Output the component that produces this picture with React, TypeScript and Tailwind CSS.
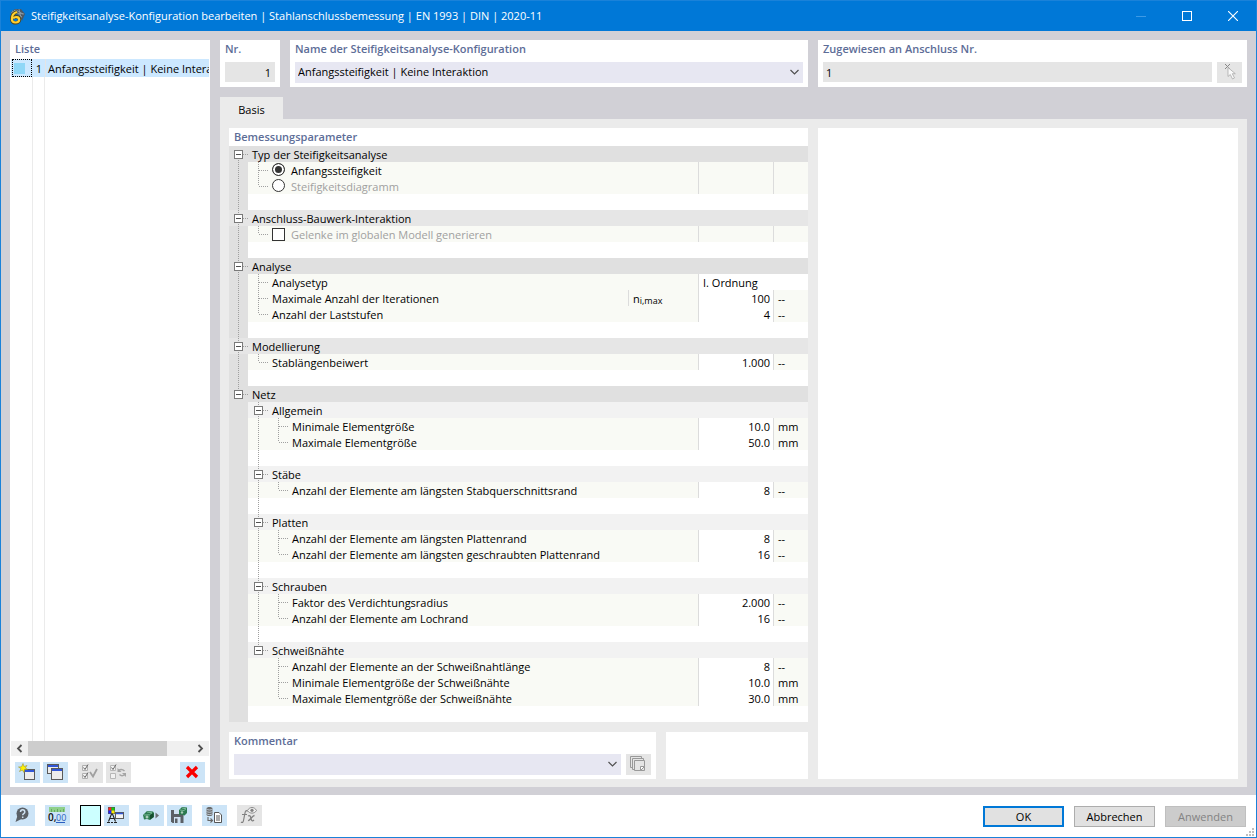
import { ReactNode } from "react";
import clsx from "clsx";

type Row = {
  label?: string;
  level?: number;
  kind?: "group" | "subgroup" | "radio" | "checkbox" | "blank";
  checked?: boolean;
  light?: boolean;
  last?: boolean;
  symbol?: ReactNode;
  value?: string;
  unit?: string;
  trunk?: boolean;
};

const rows: Row[] = [
  { label: "Typ der Steifigkeitsanalyse", kind: "group" },
  { label: "Anfangssteifigkeit", level: 1, kind: "radio", checked: true },
  { label: "Steifigkeitsdiagramm", level: 1, kind: "radio", last: true },
  { kind: "blank" },
  { label: "Anschluss-Bauwerk-Interaktion", kind: "group", light: true },
  { label: "Gelenke im globalen Modell generieren", level: 1, kind: "checkbox", last: true },
  { kind: "blank" },
  { label: "Analyse", kind: "group" },
  { label: "Analysetyp", level: 1, value: "I. Ordnung" },
  {
    label: "Maximale Anzahl der Iterationen",
    level: 1,
    symbol: (
      <>
        n<sub className="bottom-0 top-px text-[9px]">i,max</sub>
      </>
    ),
    value: "100",
    unit: "--",
  },
  { label: "Anzahl der Laststufen", level: 1, value: "4", unit: "--", last: true },
  { kind: "blank" },
  { label: "Modellierung", kind: "group", light: true },
  { label: "Stablängenbeiwert", level: 1, value: "1.000", unit: "--", last: true },
  { kind: "blank" },
  { label: "Netz", kind: "group", last: true },
  { label: "Allgemein", level: 1, kind: "subgroup" },
  { label: "Minimale Elementgröße", level: 2, value: "10.0", unit: "mm", trunk: true },
  { label: "Maximale Elementgröße", level: 2, value: "50.0", unit: "mm", trunk: true, last: true },
  { kind: "blank", trunk: true },
  { label: "Stäbe", level: 1, kind: "subgroup" },
  { label: "Anzahl der Elemente am längsten Stabquerschnittsrand", level: 2, value: "8", unit: "--", trunk: true, last: true },
  { kind: "blank", trunk: true },
  { label: "Platten", level: 1, kind: "subgroup" },
  { label: "Anzahl der Elemente am längsten Plattenrand", level: 2, value: "8", unit: "--", trunk: true },
  { label: "Anzahl der Elemente am längsten geschraubten Plattenrand", level: 2, value: "16", unit: "--", trunk: true, last: true },
  { kind: "blank", trunk: true },
  { label: "Schrauben", level: 1, kind: "subgroup" },
  { label: "Faktor des Verdichtungsradius", level: 2, value: "2.000", unit: "--", trunk: true },
  { label: "Anzahl der Elemente am Lochrand", level: 2, value: "16", unit: "--", trunk: true, last: true },
  { kind: "blank", trunk: true },
  { label: "Schweißnähte", level: 1, kind: "subgroup", last: true },
  { label: "Anzahl der Elemente an der Schweißnahtlänge", level: 2, value: "8", unit: "--" },
  { label: "Minimale Elementgröße der Schweißnähte", level: 2, value: "10.0", unit: "mm" },
  { label: "Maximale Elementgröße der Schweißnähte", level: 2, value: "30.0", unit: "mm", last: true },
  { kind: "blank" },
];

const netzIndex = rows.findIndex((r) => r.label === "Netz");

type GuideProps = { up?: boolean; down?: boolean; arm?: boolean; box?: boolean };

// One 20x16 cell of tree lines
function Guide({ up, down, arm, box }: GuideProps) {
  return (
    <svg className="h-4 w-5 shrink-0" viewBox="0 0 20 16" fill="none" stroke="#a0a0a0" shapeRendering="crispEdges">
      {up && <path d="M10.5 0v8" strokeDasharray="1 1" />}
      {down && <path d="M10.5 8v8" strokeDasharray="1 1" />}
      {arm && <path d="M11 8.5h10" strokeDasharray="1 1" />}
      {box && (
        <>
          <rect x="6.5" y="4.5" width="8" height="8" fill="#fff" stroke="#7a7a7a" />
          <path d="M8 8.5h5" stroke="#505050" />
        </>
      )}
    </svg>
  );
}

function TreeRow({ row, index }: { row: Row; index: number }) {
  const { kind, level = 0 } = row;
  const isGroup = kind === "group";
  const isHead = isGroup || kind === "subgroup";
  const isItem = !isHead && kind !== "blank";
  const isOption = kind === "radio" || kind === "checkbox";
  const id = `param-${index}`;
  const wide = row.value && !row.unit;

  return (
    <tr
      className={clsx(
        "h-4",
        isGroup && (row.light ? "bg-[#e6e6e6]" : "bg-[#e0e0e0]"),
        kind === "subgroup" && "bg-[#f2f2f2]",
        isItem && "bg-[#f9faf5]"
      )}
    >
      <td className="p-0" colSpan={row.symbol ? 1 : 2}>
        <div className="flex h-4 items-center whitespace-nowrap">
          <div className={clsx("flex shrink-0", isGroup ? "-mr-px w-5" : "w-[19px] overflow-hidden bg-[#e0e0e0]")}>
            <span className="-ml-px flex">
              <Guide
                up={index > 0 && index <= netzIndex}
                down={index < netzIndex}
                arm={isGroup}
                box={isGroup}
              />
            </span>
          </div>
          {level === 1 && <Guide up down={!row.last} arm box={kind === "subgroup"} />}
          {(level === 2 || kind === "blank") && <Guide up={row.trunk} down={row.trunk} />}
          {level === 2 && <Guide up down={!row.last} arm />}
          {isOption && (
            <input
              id={id}
              type={kind}
              name={kind === "radio" ? "analysis-type" : undefined}
              defaultChecked={row.checked}
              disabled={!row.checked}
              className={clsx(
                "ml-1 size-[13px] shrink-0 appearance-none border border-[#333] bg-white",
                kind === "radio" && "mb-[2px] rounded-full checked:bg-[#333] checked:shadow-[inset_0_0_0_2px_#fff]"
              )}
            />
          )}
          {isOption ? (
            <label htmlFor={id} className={clsx("pl-[6px] pt-[2px]", !row.checked && "text-[#a0a0a0]")}>
              {row.label}
            </label>
          ) : (
            <span className="pl-1 pt-[2px]">{row.label}</span>
          )}
        </div>
      </td>
      {row.symbol && (
        <td className="border-l border-[#dcdcdc] p-0">
          <div className="h-4 pl-1 pt-px">{row.symbol}</div>
        </td>
      )}
      {isItem ? (
        <>
          <td colSpan={wide ? 2 : 1} className={clsx("border-l border-[#dcdcdc] p-0", row.value && "bg-white")}>
            <div className={clsx("h-4 pt-px", wide ? "pl-1" : "pr-[3px] text-right")}>{row.value}</div>
          </td>
          {!wide && (
            <td className="border-l border-[#dcdcdc] p-0">
              <div className="h-4 pl-1 pt-px">{row.unit}</div>
            </td>
          )}
        </>
      ) : (
        <td colSpan={2} className="p-0" />
      )}
    </tr>
  );
}

function Panel({ title, className, children }: { title?: string; className?: string; children?: ReactNode }) {
  return (
    <section className={clsx("flex min-w-0 flex-col bg-white", className)}>
      {title && <h2 className="h-[18px] shrink-0 px-[5px] font-semibold leading-[18px] text-[#5d6d97]">{title}</h2>}
      {children}
    </section>
  );
}

type IconButtonProps = { label: string; disabled?: boolean; className?: string; children: ReactNode };

function IconButton({ label, disabled, className, children }: IconButtonProps) {
  return (
    <button
      type="button"
      aria-label={label}
      disabled={disabled}
      className={clsx(
        "flex h-[21px] w-[25px] shrink-0 items-center justify-center",
        disabled ? "bg-[#e5e5e5]" : "bg-[#cce4f7]",
        className
      )}
    >
      {children}
    </button>
  );
}

function Icon({ children }: { children: ReactNode }) {
  return (
    <svg width="19" height="19" viewBox="0 0 19 19" fill="none">
      {children}
    </svg>
  );
}

function Chevron() {
  return (
    <svg className="pointer-events-none absolute right-1 top-[7px]" width="9" height="7" viewBox="0 0 9 7" fill="none">
      <path d="M.5 1l4 4 4-4" stroke="#505050" strokeWidth="1.2" />
    </svg>
  );
}

function TitleBar() {
  return (
    <header className="flex h-[30px] shrink-0 items-center bg-[#0078d7] pl-2 text-white">
      <svg width="16" height="17" viewBox="0 0 16 17" fill="none">
        <path d="M1 5l5-4 6 0 4 5-3 7-3-6z" fill="#4a5866" />
        <path d="M2 5l5-3 7 4M5 2l8 7M10 1l2 9M3 3l4 2 8 1" stroke="#9aa9b5" strokeWidth=".7" />
        <path d="M8 4C4 5 2.500 8 2.700 11.500c.2 4.500 7.800 4.500 7.800 0 0-3.300-4.500-3.600-6.200-1.300" stroke="#4b4420" strokeWidth="3.400" />
        <path d="M8 4C4 5 2.700 8 2.900 11.500c.2 4 7.300 4 7.300 0 0-3-4.600-3.200-6-1" stroke="#ffcf2e" strokeWidth="2.200" />
      </svg>
      <h1 className="min-w-0 flex-1 truncate pl-[6px]">
        Steifigkeitsanalyse-Konfiguration bearbeiten | Stahlanschlussbemessung | EN 1993 | DIN | 2020-11
      </h1>
      <button type="button" aria-label="Minimieren" disabled className="flex h-full w-[46px] items-center justify-center">
        <svg width="10" height="10" viewBox="0 0 10 10"><path d="M0 5.500h10" stroke="#3d9ae6" /></svg>
      </button>
      <button type="button" aria-label="Maximieren" className="flex h-full w-[46px] items-center justify-center">
        <svg width="10" height="10" viewBox="0 0 10 10"><rect x=".5" y=".5" width="9" height="9" fill="none" stroke="#fff" /></svg>
      </button>
      <button type="button" aria-label="Schließen" className="flex h-full w-[46px] items-center justify-center">
        <svg width="10" height="10" viewBox="0 0 10 10"><path d="M0 0l10 10M10 0L0 10" stroke="#fff" strokeWidth="1.100" /></svg>
      </button>
    </header>
  );
}

function ListPanel() {
  return (
    <Panel title="Liste" className="w-[200px] shrink-0">
      <div className="flex min-h-0 flex-1 flex-col px-px pt-px">
        <button type="button" className="flex h-[18px] w-full shrink-0 items-center overflow-hidden whitespace-nowrap bg-[#cce8ff] text-left">
          <span className="ml-px flex h-[18px] w-5 shrink-0 items-center border border-dotted border-black pl-px">
            <span className="size-[11px] bg-[#8fd7f7]" />
          </span>
          <span className="w-[13px] shrink-0 pt-[2px] pl-px text-center">1</span>
          <span className="border-l border-[#e5e5e5] pt-[2px] pl-[2px]">Anfangssteifigkeit | Keine Interaktion</span>
        </button>
        <div className="flex flex-1">
          <div className="w-[22px] border-r border-[#ebebeb]" />
          <div className="w-3 border-r border-[#ebebeb]" />
        </div>
        <div className="flex h-[15px] shrink-0 bg-[#f0f0f0]">
          <button type="button" aria-label="Nach links" className="flex w-[17px] items-center justify-center">
            <svg width="7" height="9" viewBox="0 0 7 9" fill="none"><path d="M5.500 1L2 4.500 5.500 8" stroke="#505050" strokeWidth="1.800" /></svg>
          </button>
          <div className="flex-1">
            <div className="h-full w-[85%] bg-[#cdcdcd]" />
          </div>
          <button type="button" aria-label="Nach rechts" className="flex w-[17px] items-center justify-center">
            <svg width="7" height="9" viewBox="0 0 7 9" fill="none"><path d="M1.500 1L5 4.500 1.500 8" stroke="#505050" strokeWidth="1.800" /></svg>
          </button>
        </div>
      </div>
      <div className="flex shrink-0 gap-[3px] px-[5px] pt-[6px] pb-1">
        <IconButton label="Neu">
          <Icon>
            <rect x="6.500" y="6.500" width="10" height="10" fill="#ececec" stroke="#5a5a5a" />
            <path d="M7 8h9" stroke="#3156d6" strokeWidth="2" />
            <path d="M5 .5l1 3L9 2.500 7.300 5 9.500 6.300l-3 .2L6 9.500 4.300 7 1.500 8.500 3 5.500.5 4l3-.2z" fill="#fff200" stroke="#9c9440" strokeWidth=".6" />
          </Icon>
        </IconButton>
        <IconButton label="Kopieren">
          <Icon>
            <rect x="1.500" y="1.500" width="11" height="9" fill="#ececec" stroke="#5a5a5a" />
            <path d="M2 3h10" stroke="#3156d6" strokeWidth="2" />
            <rect x="5.500" y="5.500" width="11" height="11" fill="#ececec" stroke="#5a5a5a" />
            <path d="M6 7h10" stroke="#3156d6" strokeWidth="2" />
          </Icon>
        </IconButton>
        <IconButton label="Alle auswählen" disabled className="ml-[7px]">
          <Icon>
            <path d="M1.500 2.500h5v5h-5zM1.500 10.500h5v5h-5z" fill="#f2f2f2" stroke="#b0b0b0" />
            <path d="M2.500 4.500l1.500 2 3-5M2.500 12.500l1.500 2 3-5" stroke="#666" />
            <path d="M9 9l3 4.500L16 6" stroke="#a0a0a0" strokeWidth="1.800" />
          </Icon>
        </IconButton>
        <IconButton label="Auswahl umkehren" disabled>
          <Icon>
            <path d="M1.500 2.500h5v5h-5zM1.500 10.500h5v5h-5z" fill="#f2f2f2" stroke="#b8b8b8" />
            <path d="M2.500 4.500l1.500 2 3-5" stroke="#666" />
            <path d="M9.500 7.500c2-1.500 4-1.500 6 .5M16 11.500c-2 1.500-4 1.500-5.500 0" stroke="#a5a5a5" strokeWidth="1.500" />
            <path d="M8.500 5v4h4zM17 14v-4h-4z" fill="#a5a5a5" />
          </Icon>
        </IconButton>
        <IconButton label="Löschen" className="ml-auto">
          <Icon>
            <path d="M4 4l10 10M14 4L4 14" stroke="#fa0000" strokeWidth="3.200" />
          </Icon>
        </IconButton>
      </div>
    </Panel>
  );
}

function Footer() {
  return (
    <footer className="flex h-[42px] shrink-0 items-center bg-white pb-px pl-[9px] pr-[10px]">
      <div className="flex gap-[3px]">
        <IconButton label="Hilfe">
          <Icon>
            <circle cx="9.500" cy="7.500" r="6" fill="#5b6066" />
            <path d="M4.500 9.500L2.500 16l6-3z" fill="#5b6066" />
            <path d="M7.500 6c0-3 4.300-3 4.300 0 0 1.800-2.100 1.500-2.100 3.200M9.700 10.500v1.600" stroke="#cfe2f2" strokeWidth="1.500" />
          </Icon>
        </IconButton>
        <IconButton label="Einheiten" className="ml-[7px]">
          <Icon>
            <path d="M1 1h16v5H1z" fill="#8fd08a" />
            <path d="M3.500 3v3M6.500 4v2M9.500 3v3M12.500 4v2M15.500 3v3" stroke="#5a9c5a" strokeWidth=".8" />
            <text x="0" y="15" fontSize="10" fontWeight="600" fill="#111" className="font-['Open_Sans']">0,</text>
            <text x="8" y="15" fontSize="9" fill="#2a5fc0" className="font-['Open_Sans']">00</text>
            <path d="M8 16.500h9" stroke="#2a5fc0" />
          </Icon>
        </IconButton>
        <button type="button" aria-label="Farbe" className="ml-[7px] size-[21px] shrink-0 border border-black bg-[#ccffff]" />
        <IconButton label="Darstellung">
          <Icon>
            <path d="M1 1h7v7H1z" fill="#555" />
            <path d="M1.500 1.500h3v3h-3z" fill="#f22" />
            <path d="M4.500 1.500h3v3h-3z" fill="#1c1" />
            <path d="M1.500 4.500h3v3h-3z" fill="#22f" />
            <path d="M4.500 4.500h3v3h-3z" fill="#fe0" />
            <path d="M1.500 15.500L4.500 8h1l3 7.500M3 12.500h4" stroke="#222" strokeWidth="1.100" />
            <path d="M0 16.500h3M4 16.500h2M7 16.500h3" stroke="#222" />
            <rect x="8.500" y="6.500" width="8" height="6" fill="#f4f4f4" stroke="#5a5a5a" />
            <path d="M9 7.500h7" stroke="#3156d6" strokeWidth="1.500" />
          </Icon>
        </IconButton>
        <IconButton label="Vorlage laden" className="ml-[7px]">
          <Icon>
            <path d="M1 9l4-4 6 .5 1 1.500v4l-4 3-3-1-3 .5z" fill="#2c7a4f" />
            <path d="M5 6l5 .8-2.500 2L2 9" stroke="#79b796" />
            <path d="M8 9l3.500-2v4L8 13.500z" fill="#174d30" />
            <circle cx="5" cy="11" r="1.500" fill="#a9cdb8" />
            <path d="M13.500 6.500l3.500 3-3.500 3z" fill="#6c7075" />
          </Icon>
        </IconButton>
        <IconButton label="Vorlage speichern">
          <Icon>
            <path d="M1 4h12.500v13H2.500L1 15.500z" fill="#5b6066" />
            <path d="M4 4h6v4H4zM4 11h6.500v6H4z" fill="#cfe2f2" />
            <path d="M5 12.500h2.500V17H5z" fill="#5b6066" />
            <path d="M9 4l3-3 5 .5V7l-2.500 2.500-3-1-2.500.5z" fill="#2c7a4f" />
            <path d="M12 2l4 .8-2 1.700-4-.5" stroke="#79b796" />
            <circle cx="12" cy="6.500" r="1.200" fill="#a9cdb8" />
          </Icon>
        </IconButton>
        <IconButton label="Datenbank" className="ml-[7px]">
          <Icon>
            <path d="M1.500 2.500c0-2 6-2 6 0v6c0 2-6 2-6 0z" fill="#6a6a6a" />
            <path d="M1.500 3c1 1.300 5 1.300 6 0M1.500 5.300c1 1.300 5 1.300 6 0M1.500 7.600c1 1.300 5 1.300 6 0" stroke="#cfe0ee" strokeWidth=".8" />
            <path d="M3 11v3.500h4M5.500 12.500l2 2-2 2" stroke="#666" strokeWidth="1.100" />
            <path d="M9.500 6.500h4.500l2.500 2.500v7.500h-7z" fill="#fff" stroke="#555" />
            <path d="M11 10h4M11 12h4M11 14h4" stroke="#555" />
          </Icon>
        </IconButton>
        <IconButton label="Formel" disabled className="ml-[7px]">
          <Icon>
            <path d="M7.500 5.500C6.500 4 5.300 4.500 5 7l-1.500 7.500c-.4 2-1.300 2.500-2.500 1.500M2 8.500h5" stroke="#808080" strokeWidth="1.200" />
            <path d="M8 10c2-1 2.500 0 3 2.500s1.500 3 3 1.500M14.500 9.500c-2 0-5 5.500-6.500 5" stroke="#808080" strokeWidth="1.300" />
            <path d="M7.500 4.500c2-4 7-4 9 0-2 3.500-7 3.500-9 0z" fill="#eee" stroke="#8c8c8c" />
            <circle cx="12" cy="4.300" r="1.600" fill="#808080" />
          </Icon>
        </IconButton>
      </div>
      <div className="ml-auto flex gap-[10px] pt-[2px]">
        <button type="button" className="h-[21px] w-[81px] border-2 border-[#0078d7] bg-[#e1e1e1]">OK</button>
        <button type="button" className="h-[21px] w-[81px] border border-[#adadad] bg-[#e1e1e1]">Abbrechen</button>
        <button type="button" disabled className="h-[21px] w-[81px] border border-[#bfbfbf] bg-[#cccccc] text-[#838383]">Anwenden</button>
      </div>
      <svg className="-mr-2 self-end" width="8" height="8" viewBox="0 0 8 8" fill="#bfbfbf">
        <path d="M6 0h2v2H6zM3 3h2v2H3zM6 3h2v2H6zM0 6h2v2H0zM3 6h2v2H3zM6 6h2v2H6z" />
      </svg>
    </footer>
  );
}

export default function App() {
  return (
    <div className="flex min-h-screen flex-col border border-[#1a82d9] bg-[#d1d0d6] font-['Open_Sans',sans-serif] text-[11px] leading-4 text-black">
      <TitleBar />
      <main className="flex flex-1 gap-[10px] px-[9px] pt-[9px] pb-2">
        <ListPanel />
        <div className="flex min-w-0 flex-1 flex-col">
          <div className="grid grid-cols-[60px_518fr_429fr] gap-[10px]">
            <Panel title="Nr." className="h-[47px]">
              <input
                aria-label="Nr."
                readOnly
                defaultValue="1"
                className="mx-[5px] mt-1 h-5 min-w-0 bg-[#e5e5e5] px-1 pt-px text-right"
              />
            </Panel>
            <Panel title="Name der Steifigkeitsanalyse-Konfiguration">
              <div className="relative mx-[5px] mt-1">
                <select
                  aria-label="Name der Steifigkeitsanalyse-Konfiguration"
                  className="block h-[21px] w-full appearance-none bg-[#e7e7f2] px-[3px] pb-[2px]"
                >
                  <option>Anfangssteifigkeit | Keine Interaktion</option>
                </select>
                <Chevron />
              </div>
            </Panel>
            <Panel title="Zugewiesen an Anschluss Nr.">
              <div className="mx-[5px] mt-1 flex gap-[5px]">
                <input
                  aria-label="Zugewiesen an Anschluss Nr."
                  readOnly
                  defaultValue="1"
                  className="h-5 min-w-0 flex-1 bg-[#e5e5e5] px-[3px] pt-px"
                />
                <IconButton label="Auswählen" disabled>
                  <Icon>
                    <path d="M5 1l5 5M10 1L5 6" stroke="#888" />
                    <path d="M8 4.500v9l2.300-2 2.200 4.500 2-1-2.200-4.300h3z" fill="#fafafa" stroke="#aaa" strokeWidth=".8" />
                  </Icon>
                </IconButton>
              </div>
            </Panel>
          </div>
          <div role="tablist" className="mt-[10px] flex">
            <button type="button" role="tab" aria-selected="true" className="h-[22px] w-[63px] bg-[#ebebeb] pt-1">
              Basis
            </button>
          </div>
          <div className="grid flex-1 grid-cols-[579fr_420fr] gap-[10px] bg-[#ebebeb] px-[9px] pt-[9px] pb-2">
            <div className="flex min-w-0 flex-col gap-[10px]">
              <Panel title="Bemessungsparameter" className="flex-1">
                <table className="w-full table-fixed border-separate border-spacing-0">
                  <colgroup>
                    <col />
                    <col className="w-[70px]" />
                    <col className="w-[75px]" />
                    <col className="w-[35px]" />
                  </colgroup>
                  <tbody>
                    {rows.map((row, i) => (
                      <TreeRow key={i} row={row} index={i} />
                    ))}
                  </tbody>
                </table>
              </Panel>
              <div className="grid h-[47px] grid-cols-[427fr_142fr] gap-[10px]">
                <Panel title="Kommentar">
                  <div className="mx-[5px] mt-1 flex gap-[5px]">
                    <div className="relative flex-1">
                      <select aria-label="Kommentar" className="block h-[21px] w-full appearance-none bg-[#e7e7f2] px-[3px]">
                        <option></option>
                      </select>
                      <Chevron />
                    </div>
                    <IconButton label="Kommentare" disabled>
                      <Icon>
                        <path d="M1.500 12.500v-11h11v2M3.500 14.500v-11h11v2" stroke="#999" />
                        <path d="M1.500 12.500h2M3.500 14.500h2M5.500 5.500h10v10h-10z" stroke="#999" />
                        <path d="M11.500 15.500v-4h4z" fill="#fff" stroke="#999" />
                      </Icon>
                    </IconButton>
                  </div>
                </Panel>
                <Panel />
              </div>
            </div>
            <Panel />
          </div>
        </div>
      </main>
      <Footer />
    </div>
  );
}
